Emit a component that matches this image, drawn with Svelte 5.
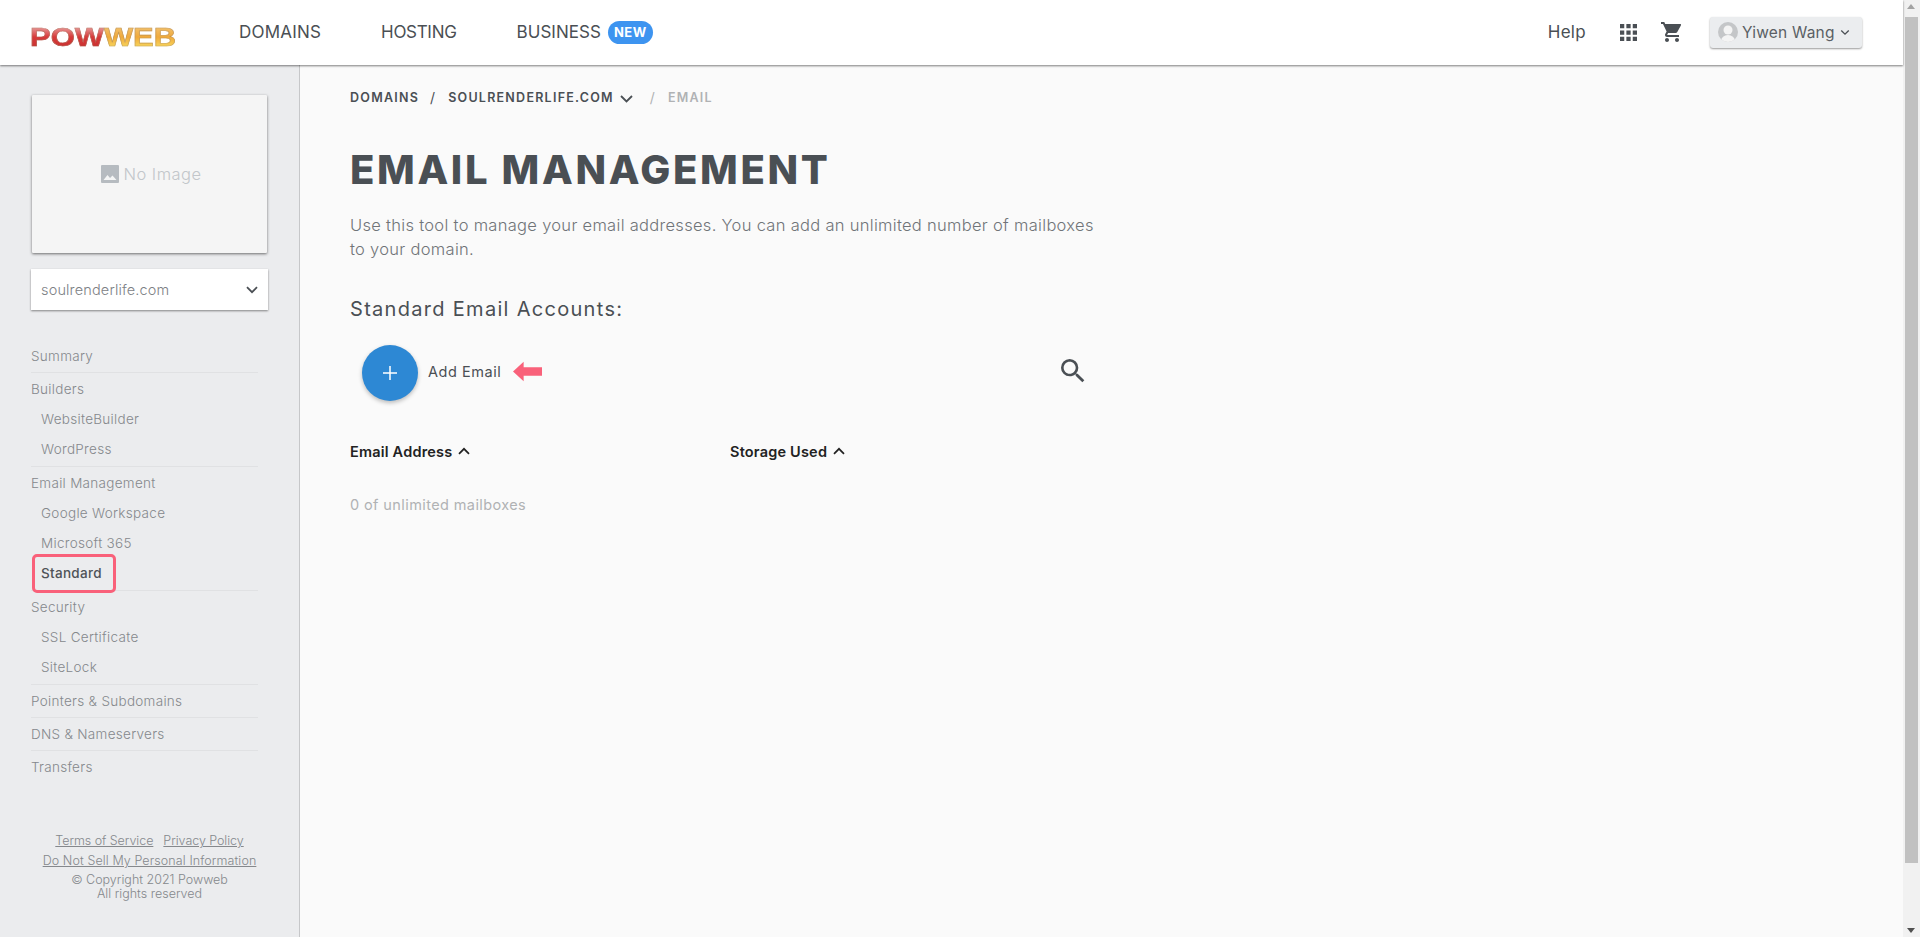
<script>
  const nav = [
    { t: 'Summary', kids: [] },
    { t: 'Builders', kids: ['WebsiteBuilder', 'WordPress'] },
    { t: 'Email Management', kids: ['Google Workspace', 'Microsoft 365', 'Standard'] },
    { t: 'Security', kids: ['SSL Certificate', 'SiteLock'] },
    { t: 'Pointers & Subdomains', kids: [] },
    { t: 'DNS & Nameservers', kids: [] },
    { t: 'Transfers', kids: [] }
  ];
</script>

<div class="page">
  <div class="main">
    <header class="top">
      <div class="logo"><span class="pow">POW</span><span class="web">WEB</span></div>
      <nav class="menu">
        <span>DOMAINS</span>
        <span class="hosting">HOSTING</span>
        <span class="biz">BUSINESS <b class="new">NEW</b></span>
      </nav>
      <div class="right">
        <span class="help">Help</span>
        <svg class="apps" viewBox="0 0 16 16" width="17" height="17"><path d="M0 0h4v4H0zM6 0h4v4H6zM12 0h4v4h-4zM0 6h4v4H0zM6 6h4v4H6zM12 6h4v4h-4zM0 12h4v4H0zM6 12h4v4H6zM12 12h4v4h-4z" fill="#4a4f54"/></svg>
        <svg class="cart" viewBox="0 0 24 24" width="24" height="24"><path fill="#4a4f54" d="M7 18c-1.1 0-1.99.9-1.99 2S5.900 22 7 22s2-.9 2-2-.9-2-2-2zM1 2v2h2l3.600 7.590-1.350 2.450c-.16.280-.25.610-.25.960 0 1.100.9 2 2 2h12v-2H7.420c-.14 0-.25-.11-.25-.25l.03-.12.9-1.630h7.450c.75 0 1.410-.41 1.750-1.030l3.580-6.490A1 1 0 0 0 20 4H5.210l-.94-2H1zm16 16c-1.100 0-1.990.9-1.990 2s.89 2 1.990 2 2-.9 2-2-.9-2-2-2z"/></svg>
        <button class="user">
          <svg viewBox="0 0 20 20" width="20" height="20" class="avatar"><defs><clipPath id="av"><circle cx="10" cy="10" r="10"/></clipPath></defs><circle cx="10" cy="10" r="10" fill="#c4c6c8"/><g clip-path="url(#av)" fill="#f4f4f4"><circle cx="10" cy="8" r="4.500"/><ellipse cx="10" cy="19" rx="7" ry="6"/></g></svg>
          <span>Yiwen Wang</span>
          <svg viewBox="0 0 12 8" width="10" height="7" class="chev"><path d="M1.500 1.500 6 6l4.500-4.500" fill="none" stroke="#4a4f54" stroke-width="1.600"/></svg>
        </button>
      </div>
    </header>

    <div class="body">
      <aside class="side">
        <div class="thumb">
          <svg viewBox="0 0 18 18" width="18" height="18"><path fill="#b6bbc0" d="M1 0h16a1 1 0 0 1 1 1v16a1 1 0 0 1-1 1H1a1 1 0 0 1-1-1V1a1 1 0 0 1 1-1z"/><path fill="#f4f5f5" d="M2.500 15 6.500 10l2.500 3 2.500-2.500L15.500 15z"/></svg>
          <span>No Image</span>
        </div>
        <div class="select">
          <span>soulrenderlife.com</span>
          <svg viewBox="0 0 12 8" width="12" height="8"><path d="M1 1.200 6 6.200l5-5" fill="none" stroke="#4a4f54" stroke-width="1.800"/></svg>
        </div>
        <ul class="nav">
          {#each nav as group}
            <li class="group" class:parent={group.kids.length > 0}>
              <div class="head">{group.t}</div>
              {#each group.kids as k}
                <div class="kid" class:active={k === 'Standard'}>{k}</div>
              {/each}
            </li>
          {/each}
        </ul>
        <footer class="foot">
          <div class="links"><a href="#t">Terms of Service</a><a href="#p">Privacy Policy</a></div>
          <div class="links wide"><a href="#d">Do Not Sell My Personal Information</a></div>
          <div class="copy">© Copyright 2021 Powweb<br />All rights reserved</div>
        </footer>
      </aside>

      <main class="content">
        <div class="crumbs">
          <span>DOMAINS</span>
          <i>/</i>
          <span>SOULRENDERLIFE.COM</span>
          <svg viewBox="0 0 13 8" width="13" height="8"><path d="M1 1 6.500 6.500 12 1" fill="none" stroke="#4a4f54" stroke-width="1.800"/></svg>
          <i class="dim gap">/</i>
          <span class="dim">EMAIL</span>
        </div>
        <h1>EMAIL MANAGEMENT</h1>
        <p class="intro">Use this tool to manage your email addresses. You can add an unlimited number of mailboxes<br />to your domain.</p>
        <h2>Standard Email Accounts:</h2>
        <div class="actions">
          <div class="fab">
            <svg viewBox="0 0 16 16" width="16" height="16"><path d="M8 1v14M1 8h14" stroke="#fff" stroke-width="1.500"/></svg>
          </div>
          <span class="add">Add Email</span>
          <svg class="arrow" viewBox="0 0 30 20" width="29" height="21"><path d="M0 10 11 0v5.500h19v9H11V20z" fill="#f9617a"/></svg>
          <svg class="search" viewBox="0 0 24 24" width="32" height="32"><path fill="#4a4f54" d="M15.500 14h-.79l-.28-.27A6.470 6.470 0 0 0 16 9.500 6.500 6.500 0 1 0 9.500 16c1.610 0 3.090-.59 4.230-1.570l.27.28v.79l5 4.990L20.490 19l-4.990-5zm-6 0C7.010 14 5 11.990 5 9.500S7.010 5 9.500 5 14 7.010 14 9.500 11.990 14 9.500 14z"/></svg>
        </div>
        <div class="cols">
          <div class="col first">Email Address <svg viewBox="0 0 12 8" width="12" height="8"><path d="M1 6.800 6 1.800l5 5" fill="none" stroke="#222" stroke-width="1.700"/></svg></div>
          <div class="col">Storage Used <svg viewBox="0 0 12 8" width="12" height="8"><path d="M1 6.800 6 1.800l5 5" fill="none" stroke="#222" stroke-width="1.700"/></svg></div>
        </div>
        <div class="count">0 of unlimited mailboxes</div>
      </main>
    </div>
  </div>
  <div class="scrollbar">
    <div class="btn up"></div>
    <div class="bar"></div>
    <div class="btn down"></div>
  </div>
</div>

<style>
  :global(body) { margin: 0; overflow: hidden; }
  .page {
    display: flex; width: 1920px; height: 937px; overflow: hidden;
    font-family: Inter, "Open Sans", sans-serif; color: #4a4f54; background: #fafafa;
  }
  .main { flex: 1; min-width: 0; display: flex; flex-direction: column; }
  .top {
    position: relative; z-index: 2; height: 65px; box-sizing: border-box; background: #fff;
    display: flex; align-items: center; padding: 0 41px 1px 30px;
    box-shadow: 0 1px 2px rgba(0,0,0,.5);
  }
  .logo {
    width: 150px; margin-top: 9px; font: 700 26px/1 "Liberation Sans", sans-serif;
    transform: scaleX(1.190); transform-origin: left; white-space: nowrap;
    -webkit-text-stroke: .6px rgba(150,120,90,.5);
  }
  .logo span { -webkit-background-clip: text; background-clip: text; color: transparent; }
  .pow { background-image: linear-gradient(#e9a0a0 15%, #d83a3a 50%, #c93030 85%); }
  .web { background-image: linear-gradient(#f2c270 15%, #f0a93a 50%, #f8d85e 85%); }
  .menu { display: flex; align-items: center; gap: 60px; margin-left: 59px; font-size: 17px; letter-spacing: .2px; }
  .hosting { letter-spacing: -.3px; }
  .biz { display: flex; align-items: center; gap: 7px; letter-spacing: .05px; }
  .new {
    background: #3d94f0; color: #fff; font-size: 13px; font-weight: 700; line-height: 23px; height: 23px;
    padding: 0 6px; border-radius: 12px; letter-spacing: .4px;
  }
  .right { margin-left: auto; display: flex; align-items: center; }
  .help { font-size: 17px; margin-right: 34px; letter-spacing: .3px; }
  .apps { margin-right: 23px; }
  .cart { margin-right: 26px; }
  .user {
    display: flex; align-items: center; gap: 4px; width: 152px; height: 31px; box-sizing: border-box;
    padding: 0 12px 0 8px; background: #ebedef; border: 0; border-radius: 3px; color: #5a5f64;
    font: 15.500px Inter, sans-serif; letter-spacing: .2px; box-shadow: 0 1px 2px rgba(0,0,0,.4);
  }
  .chev { margin-left: auto; }
  .body { flex: 1; display: flex; min-height: 0; }
  .side {
    width: 300px; box-sizing: border-box; background: #ebecee; border-right: 1px solid #c6c7c9;
    padding: 30px 0 0; display: flex; flex-direction: column;
  }
  .thumb {
    width: 235px; height: 158px; margin-left: 32px; box-sizing: border-box; padding-left: 4px; background: #f5f5f5; border-radius: 1px;
    display: flex; align-items: center; justify-content: center; gap: 4px;
    box-shadow: 0 1px 3px rgba(0,0,0,.55); color: #c2c6ca; font-size: 16.500px; font-weight: 300; letter-spacing: .5px;
  }
  .select {
    width: 237px; height: 41px; margin: 16px 0 0 31px; box-sizing: border-box; padding: 0 10px;
    background: #fff; display: flex; align-items: center; justify-content: space-between;
    box-shadow: 0 1px 2px rgba(0,0,0,.45); color: #7d8185; font-size: 14.500px; font-weight: 300; letter-spacing: .15px;
  }
  .nav { list-style: none; margin: 30px 0 0 31px; padding: 0; width: 227px; font-size: 13.500px; letter-spacing: .3px; color: #85888c; font-weight: 300; }
  .group { border-bottom: 1px solid #e0e1e3; padding: 1px 0; }
  .group.parent { padding-bottom: 2px; }
  .group:last-child { border-bottom: 0; }
  .head { height: 30px; line-height: 30px; }
  .kid { height: 30px; line-height: 30px; padding-left: 10px; position: relative; }
  .kid.active { color: #4f5357; font-weight: 500; }
  .kid.active::before {
    content: ""; position: absolute; left: 1px; top: -4px; width: 84px; height: 39px;
    border: 3.500px solid #f9617a; border-radius: 5px; box-sizing: border-box;
  }
  .foot { margin-top: 48px; text-align: center; font-size: 12.500px; font-weight: 300; color: #85888c; line-height: 14px; }
  .links { display: flex; justify-content: center; gap: 10px; height: 20px; line-height: 20px; letter-spacing: -.05px; }
  .links.wide { letter-spacing: .1px; }
  .links a { color: inherit; text-decoration: underline; }
  .copy { margin-top: 2px; }
  .content { flex: 1; padding: 0 0 0 50px; }
  .crumbs { display: flex; align-items: center; height: 20px; margin-top: 22px; font-size: 12.500px; font-weight: 600; letter-spacing: 1.250px; }
  .crumbs svg { margin: 3px 0 0 6px; }
  .crumbs i { font-style: normal; font-weight: 400; font-size: 14px; margin: 0 13px 0 11px; letter-spacing: 0; }
  .crumbs i.gap { margin-left: 17px; }
  .dim { color: #b0b2b4; }
  h1 { margin: 38px 0 0; font-size: 40px; line-height: 50px; font-weight: 800; letter-spacing: 2.650px; color: #4a4f54; }
  .intro { margin: 19px 0 0; font-size: 16.500px; line-height: 23.500px; font-weight: 300; letter-spacing: .3px; color: #707478; }
  h2 { margin: 34px 0 0; font-size: 20px; line-height: 28px; font-weight: 400; letter-spacing: 1.300px; }
  .actions { display: flex; align-items: center; width: 739px; height: 56px; margin-top: 22px; padding-left: 12px; box-sizing: border-box; }
  .fab { width: 56px; height: 56px; border-radius: 50%; background: #2d88d4; display: flex; align-items: center; justify-content: center; box-shadow: 0 2px 4px rgba(0,0,0,.25); }
  .add { margin: 0 0 3px 10px; font-size: 14.500px; letter-spacing: .55px; }
  .arrow { margin: 0 0 3px 12px; }
  .search { margin-left: auto; margin-bottom: 4px; }
  .cols { display: flex; margin-top: 40px; font-size: 14.500px; font-weight: 600; letter-spacing: .2px; color: #222; height: 20px; align-items: center; }
  .col { display: flex; align-items: center; gap: 6px; }
  .col.first { width: 380px; }
  .count { margin-top: 35px; font-size: 14.500px; color: #b0b2b4; font-weight: 400; letter-spacing: .4px; }
  .scrollbar { width: 17px; background: #f1f1f1; display: flex; flex-direction: column; }
  .bar { height: 846px; background: #c1c1c1; margin: 0 2px; box-sizing: border-box; }
  .btn { height: 17px; position: relative; }
  .down { margin-top: auto; }
  .btn::after { content: ""; position: absolute; left: 4px; border: 4.500px solid transparent; }
  .up::after { top: 0; border-bottom: 5px solid #a3a3a3; }
  .down::after { bottom: 0; border-top: 5px solid #505050; }
</style>
